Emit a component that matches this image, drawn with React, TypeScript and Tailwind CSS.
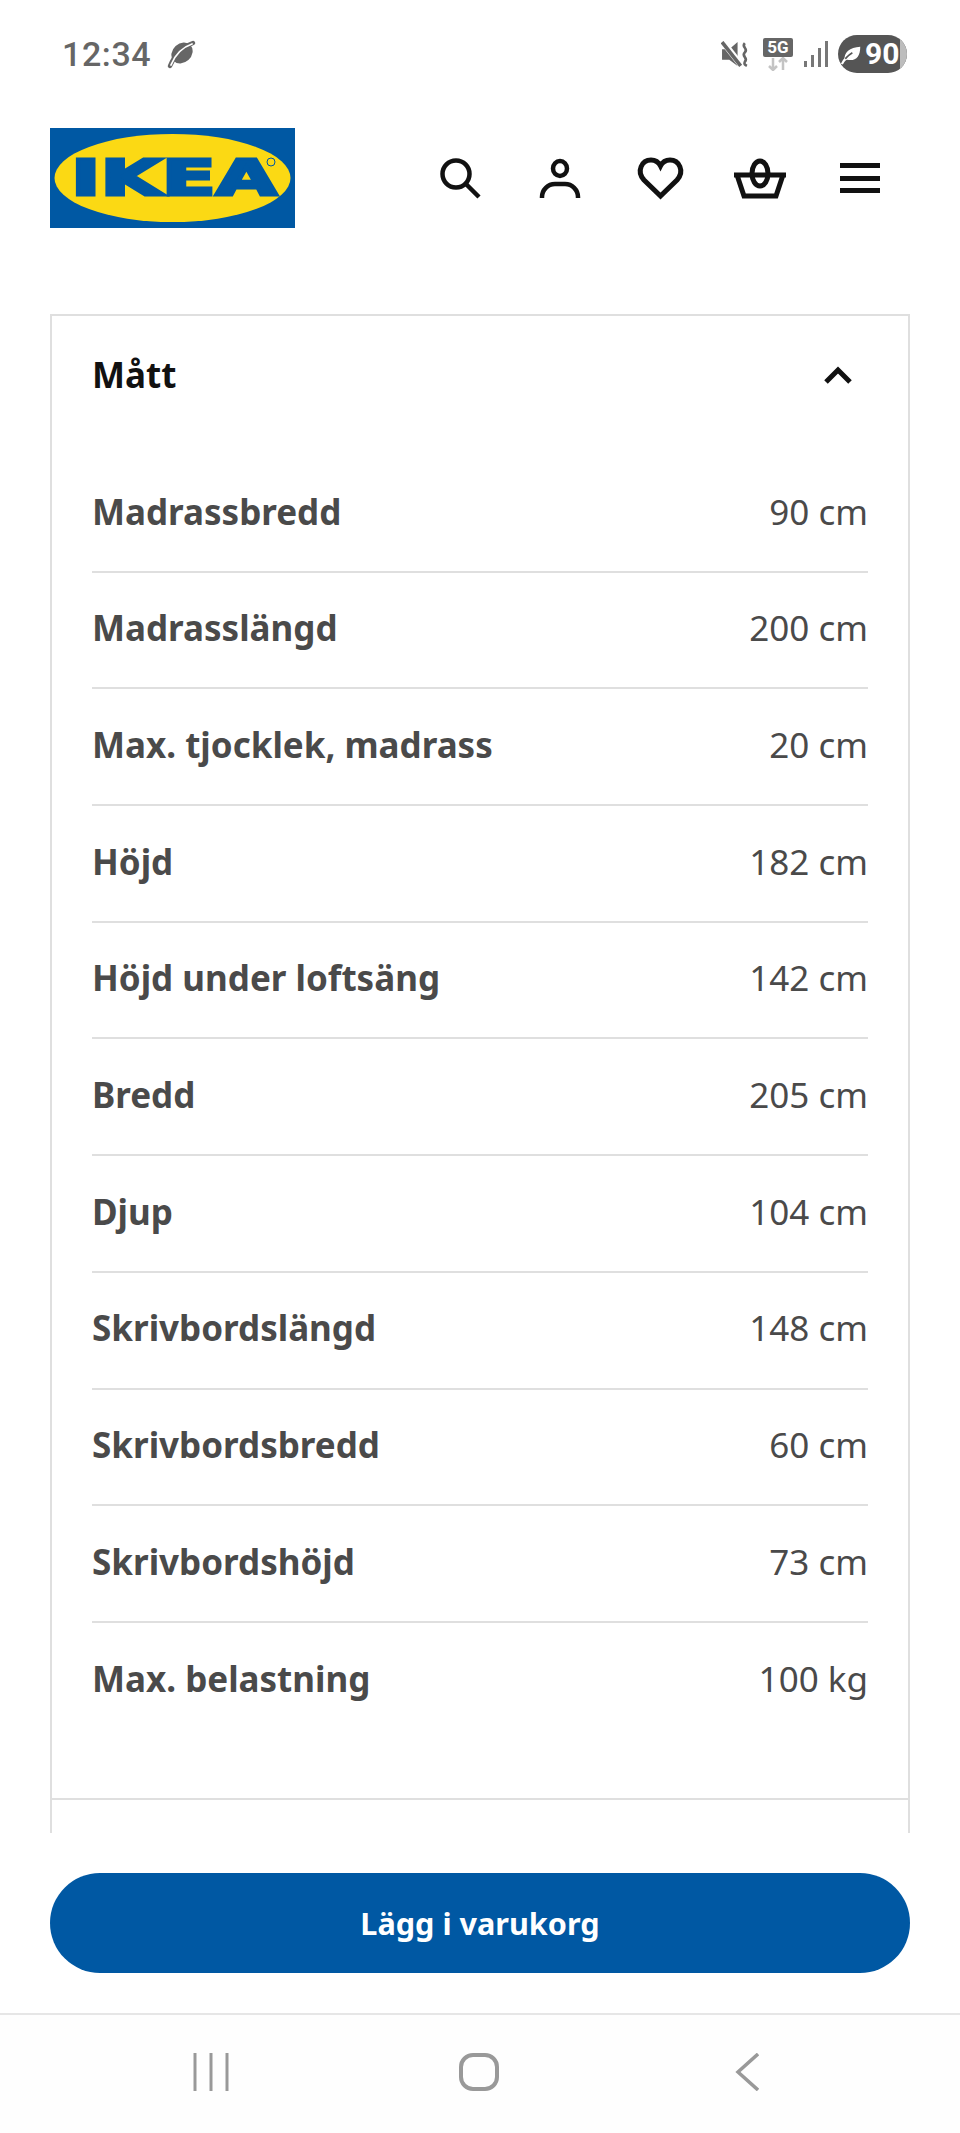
import React from 'react';

const rows = [
  ['Madrassbredd', '90 cm'],
  ['Madrasslängd', '200 cm'],
  ['Max. tjocklek, madrass', '20 cm'],
  ['Höjd', '182 cm'],
  ['Höjd under loftsäng', '142 cm'],
  ['Bredd', '205 cm'],
  ['Djup', '104 cm'],
  ['Skrivbordslängd', '148 cm'],
  ['Skrivbordsbredd', '60 cm'],
  ['Skrivbordshöjd', '73 cm'],
  ['Max. belastning', '100 kg'],
];

const StatusLeft = () => (
  <div className="flex items-center gap-[15px]">
    <span className="font-['Roboto',sans-serif] font-medium text-[34px] leading-none tracking-[0.6px] text-[#666]">12:34</span>
    <svg width="30" height="30" viewBox="0 0 30 30">
      <ellipse cx="16" cy="14" rx="11.500" ry="9.500" transform="rotate(-42 16 14)" fill="#666" />
      <path d="M4 27C8 17 16 8 27 4" stroke="#666" strokeWidth="4.500" fill="none" strokeLinecap="round" />
      <path d="M5 26C9 16 17 8 26 5" stroke="#fff" strokeWidth="1.800" fill="none" strokeLinecap="round" />
    </svg>
  </div>
);

const StatusRight = () => (
  <div className="flex items-center">
    <svg width="29" height="27" viewBox="0 0 28 26" className="mr-[13px]">
      <path d="M1 8h7l8-7v23l-8-6H1z" fill="#666" />
      <path d="M2 1l18 23" stroke="#fff" strokeWidth="6" />
      <path d="M1 1l18 23" stroke="#666" strokeWidth="3.500" />
      <path d="M23 2c-4 4 4 5 0 9s4 5 0 9c-1 2 0 3 2 4" stroke="#666" strokeWidth="2.500" fill="none" />
    </svg>
    <div className="flex flex-col items-center mr-[11px]">
      <div className="w-[30px] h-[19px] rounded-[2px] bg-[#666] text-white font-['Roboto',sans-serif] font-bold text-[17px] leading-[19px] text-center">5G</div>
      <svg width="24" height="14" viewBox="0 0 24 14">
        <path d="M7 1v12M3 9l4 4 4-4" stroke="#c4c4c4" strokeWidth="2.500" fill="none" />
        <path d="M17 13V1M13 5l4-4 4 4" stroke="#c4c4c4" strokeWidth="2.500" fill="none" />
      </svg>
    </div>
    <svg width="24" height="26" viewBox="0 0 24 26" className="mr-[10px]">
      <rect x="0" y="20" width="3" height="6" fill="#777" />
      <rect x="7" y="14" width="3" height="12" fill="#777" />
      <rect x="14" y="7" width="3" height="19" fill="#777" />
      <rect x="21" y="0" width="3" height="26" fill="#777" />
    </svg>
    <div className="relative w-[69px] h-[38px] rounded-full bg-[#555] overflow-hidden flex items-center pl-[3px]">
      <div className="absolute right-0 top-0 bottom-0 w-[7px] bg-[#bdbdbd]" />
      <svg width="21" height="21" viewBox="0 0 24 24" className="shrink-0">
        <path d="M4 19C3 9 10 4 22 3c0 11-5 17-15 15z" fill="#fff" />
        <path d="M1 23c3-6 7-10 12-13" stroke="#555" strokeWidth="1.800" fill="none" />
        <path d="M1 23c1-2 2-4 4-6" stroke="#fff" strokeWidth="2.500" fill="none" />
      </svg>
      <span className="ml-[3px] font-['Roboto',sans-serif] font-bold text-[30px] leading-none text-white">90</span>
    </div>
  </div>
);

const IkeaLogo = () => (
  <svg width="245" height="100" viewBox="0 0 245 100">
    <rect width="245" height="100" fill="#0058a3" />
    <ellipse cx="122.5" cy="50" rx="118" ry="44" fill="#fbd914" />
    <text
      x="21"
      y="67"
      textLength="206"
      lengthAdjust="spacingAndGlyphs"
      fontFamily="'DejaVu Sans', sans-serif"
      fontWeight="700"
      fontSize="50"
      fill="#0058a3"
      stroke="#0058a3"
      strokeWidth="3"
    >
      IKEA
    </text>
    <circle cx="221" cy="34" r="4" fill="none" stroke="#0058a3" strokeWidth="1" />
  </svg>
);

const NavIcons = () => (
  <div className="flex items-center gap-[40px]">
    <svg width="60" height="60" viewBox="0 0 60 60" fill="none" stroke="#111" strokeWidth="4.500">
      <circle cx="26" cy="26" r="13.500" />
      <path d="M36 36l13 13" />
    </svg>
    <svg width="60" height="60" viewBox="0 0 60 60" fill="none" stroke="#111" strokeWidth="4.500">
      <ellipse cx="30" cy="20.500" rx="7" ry="7.500" />
      <path d="M12 50v-1a13 13 0 0 1 13-13h10a13 13 0 0 1 13 13v1" />
    </svg>
    <svg width="60" height="60" viewBox="0 0 60 60" fill="none" stroke="#111" strokeWidth="5">
      <path d="M30.500 48L14 32c-8-9-2-20 7-20 5 0 8 3 9.500 6 1.500-3 4.500-6 9.500-6 9 0 15 11 7 20z" />
    </svg>
    <svg width="60" height="60" viewBox="0 0 60 60" fill="none" stroke="#111" strokeWidth="5">
      <ellipse cx="30" cy="25.500" rx="8" ry="12.500" />
      <path d="M4 27h52M7 27l7 21h32l7-21" />
    </svg>
    <svg width="60" height="60" viewBox="0 0 60 60" fill="#111">
      <rect x="10" y="15" width="40" height="5" />
      <rect x="10" y="28" width="40" height="5" />
      <rect x="10" y="40" width="40" height="5" />
    </svg>
  </div>
);

export default function App() {
  return (
    <div className="w-[960px] h-[2133px] bg-white flex flex-col font-['Noto_Sans',sans-serif]">
      <div className="h-[108px] pl-[62px] pr-[53px] flex items-center justify-between shrink-0">
        <StatusLeft />
        <StatusRight />
      </div>

      <header className="h-[140px] pl-[50px] pr-[70px] flex items-start justify-between shrink-0">
        <div className="pt-[20px]">
          <IkeaLogo />
        </div>
        <div className="pt-[40px]">
          <NavIcons />
        </div>
      </header>

      <main className="flex-1 min-h-0 mx-[50px] mt-[66px] overflow-hidden">
        <div className="border-2 border-[#dfdfdf]">
          <div className="h-[118px] pl-[40px] pr-[52px] flex items-center justify-between">
            <h2 className="text-[35px] font-bold text-[#111]">Mått</h2>
            <svg width="36" height="36" viewBox="0 0 36 36" fill="none" stroke="#111" strokeWidth="5">
              <path d="M6 25l12-12 12 12" />
            </svg>
          </div>
          <div className="px-[40px] pt-[22px] pb-[58px]">
            {rows.map(([label, value], i) => (
              <div
                key={label}
                className={`h-[116.7px] pb-[3px] flex items-center justify-between text-[35px] text-[#4a4a4a] ${i < rows.length - 1 ? 'border-b-2 border-[#dfdfdf]' : ''}`}
              >
                <span className="font-bold">{label}</span>
                <span>{value}</span>
              </div>
            ))}
          </div>
          <div className="border-t-2 border-[#dfdfdf] h-[120px]" />
        </div>
      </main>

      <div className="h-[180px] shrink-0 px-[50px] pt-[40px] flex flex-col">
        <button className="h-[100px] pt-[2px] rounded-full bg-[#0058a3] text-white text-[30.6px] font-bold">Lägg i varukorg</button>
      </div>

      <nav className="h-[120px] shrink-0 border-t-2 border-[#e6e6e6] bg-[#fefefe] flex items-start pt-[38px] pl-[193px]">
        <svg width="36" height="38" viewBox="0 0 36 38" stroke="#999" strokeWidth="3">
          <path d="M2 0v38M18 0v38M34 0v38" />
        </svg>
        <svg width="40" height="38" viewBox="0 0 40 38" fill="none" stroke="#999" strokeWidth="4" className="ml-[230px]">
          <rect x="2" y="2" width="36" height="34" rx="12" />
        </svg>
        <svg width="24" height="38" viewBox="0 0 24 38" fill="none" stroke="#999" strokeWidth="3.500" className="ml-[236px]">
          <path d="M23 1L3 19l20 18" />
        </svg>
      </nav>
    </div>
  );
}
